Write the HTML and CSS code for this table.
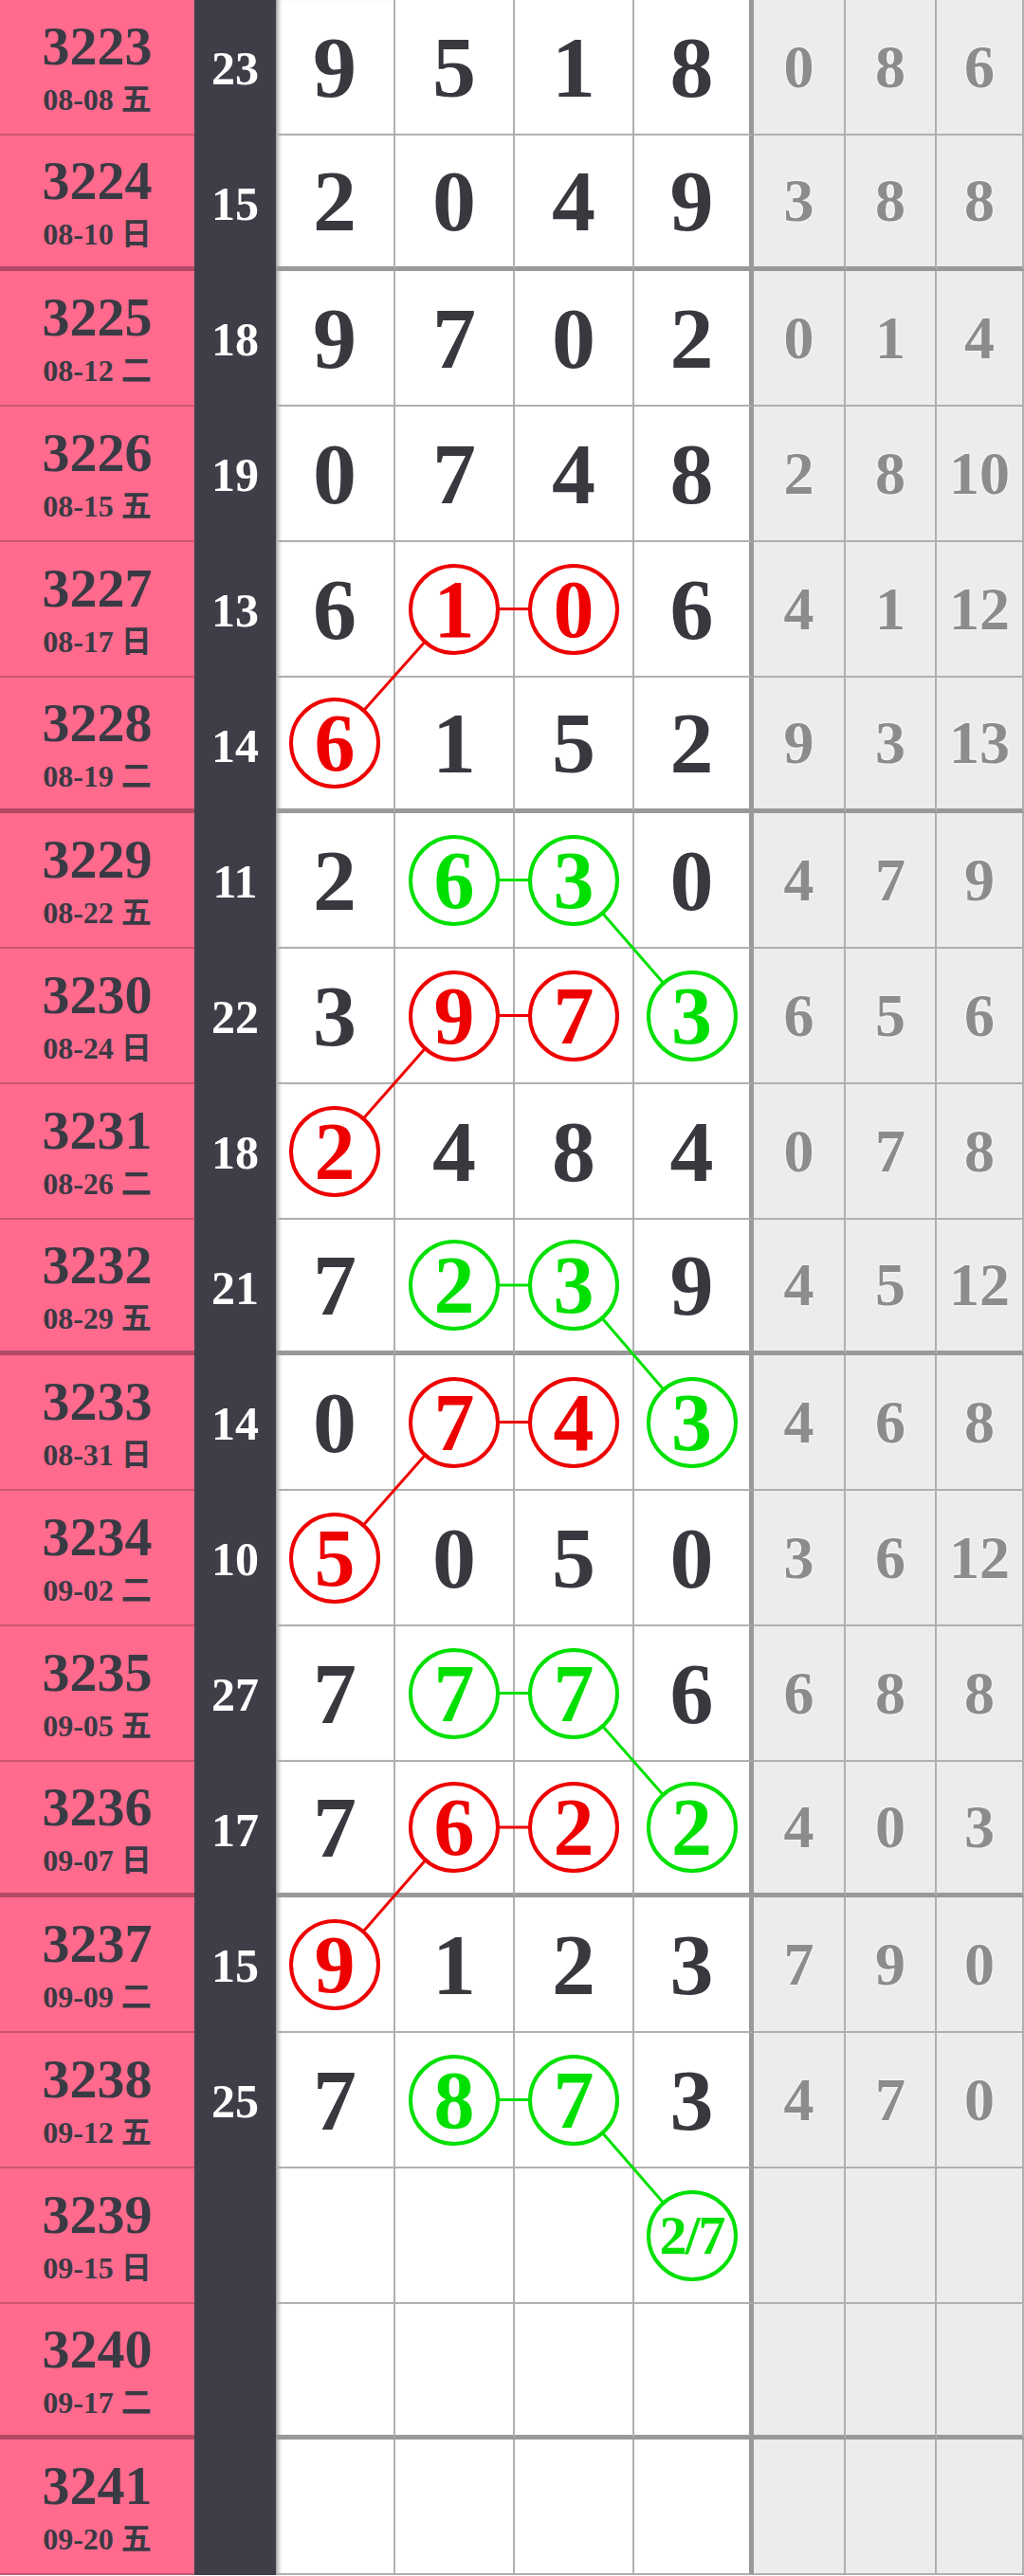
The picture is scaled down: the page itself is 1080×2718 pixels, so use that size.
FILE: index.html
```html
<!DOCTYPE html>
<html lang="zh-CN">
<head>
    <meta charset="UTF-8">
    <meta name="viewport" content="width=device-width, initial-scale=1.0">
    <title>走势图</title>
    <link rel="stylesheet" href="styles.css">
</head>
<body>
    <div class="chart" id="chart">
        <svg class="links" id="links" xmlns="http://www.w3.org/2000/svg"></svg>
    </div>

    <script>
        // issue, date, weekday, sum, digits, stats ("r"/"g" = circled, "-" = empty)
        const draws = [
            ['3223', '08-08', '五', '23', '9 5 1 8', '0 8 6'],
            ['3224', '08-10', '日', '15', '2 0 4 9', '3 8 8'],
            ['3225', '08-12', '二', '18', '9 7 0 2', '0 1 4'],
            ['3226', '08-15', '五', '19', '0 7 4 8', '2 8 10'],
            ['3227', '08-17', '日', '13', '6 r1 r0 6', '4 1 12'],
            ['3228', '08-19', '二', '14', 'r6 1 5 2', '9 3 13'],
            ['3229', '08-22', '五', '11', '2 g6 g3 0', '4 7 9'],
            ['3230', '08-24', '日', '22', '3 r9 r7 g3', '6 5 6'],
            ['3231', '08-26', '二', '18', 'r2 4 8 4', '0 7 8'],
            ['3232', '08-29', '五', '21', '7 g2 g3 9', '4 5 12'],
            ['3233', '08-31', '日', '14', '0 r7 r4 g3', '4 6 8'],
            ['3234', '09-02', '二', '10', 'r5 0 5 0', '3 6 12'],
            ['3235', '09-05', '五', '27', '7 g7 g7 6', '6 8 8'],
            ['3236', '09-07', '日', '17', '7 r6 r2 g2', '4 0 3'],
            ['3237', '09-09', '二', '15', 'r9 1 2 3', '7 9 0'],
            ['3238', '09-12', '五', '25', '7 g8 g7 3', '4 7 0'],
            ['3239', '09-15', '日', '', '- - - g2/7', '- - -'],
            ['3240', '09-17', '二', '', '- - - -', '- - -'],
            ['3241', '09-20', '五', '', '- - - -', '- - -']
        ];

        const links = [
            ['red', '3227-2', '3227-3'], ['red', '3227-2', '3228-1'],
            ['green', '3229-2', '3229-3'], ['green', '3229-3', '3230-4'],
            ['red', '3230-2', '3230-3'], ['red', '3230-2', '3231-1'],
            ['green', '3232-2', '3232-3'], ['green', '3232-3', '3233-4'],
            ['red', '3233-2', '3233-3'], ['red', '3233-2', '3234-1'],
            ['green', '3235-2', '3235-3'], ['green', '3235-3', '3236-4'],
            ['red', '3236-2', '3236-3'], ['red', '3236-2', '3237-1'],
            ['green', '3238-2', '3238-3'], ['green', '3238-3', '3239-4']
        ];

        const chart = document.getElementById('chart');

        draws.forEach(function(d) {
            const row = document.createElement('div');
            row.className = 'row' + ((+d[0] - 3220) % 4 === 0 ? ' group-end' : '');

            let html = '<div class="issue"><span class="issue-no">' + d[0] + '</span>' +
                '<span class="issue-date">' + d[1] + ' ' + d[2] + '</span></div>' +
                '<div class="sum">' + d[3] + '</div>';

            d[4].split(' ').forEach(function(v, i) {
                let cls = 'num';
                if (i === 0) cls += ' num-first';
                if (i === 3) cls += ' num-last';
                let inner = '';
                if (v[0] === 'r' || v[0] === 'g') {
                    const text = v.slice(1);
                    inner = '<span class="ball ' + (v[0] === 'r' ? 'red' : 'green') +
                        (text.length > 1 ? ' pair' : '') + '" id="b-' + d[0] + '-' + (i + 1) + '">' + text + '</span>';
                } else if (v !== '-') {
                    inner = v;
                }
                html += '<div class="' + cls + '">' + inner + '</div>';
            });

            d[5].split(' ').forEach(function(v) {
                html += '<div class="stat">' + (v === '-' ? '' : v) + '</div>';
            });

            row.innerHTML = html;
            chart.appendChild(row);
        });

        // Connect circled numbers
        const svg = document.getElementById('links');
        const box = chart.getBoundingClientRect();

        function center(id) {
            const r = document.getElementById('b-' + id).getBoundingClientRect();
            return [r.left + r.width / 2 - box.left, r.top + r.height / 2 - box.top];
        }

        links.forEach(function(l) {
            const a = center(l[1]);
            const b = center(l[2]);
            const line = document.createElementNS('http://www.w3.org/2000/svg', 'line');
            line.setAttribute('x1', a[0]);
            line.setAttribute('y1', a[1]);
            line.setAttribute('x2', b[0]);
            line.setAttribute('y2', b[1]);
            line.setAttribute('class', l[0]);
            svg.appendChild(line);
        });
    </script>
</body>
</html>
```

FILE: styles.css
```css
body {
    margin: 0;
    background: #fff;
    font-family: "Liberation Serif", "Noto Sans CJK SC", serif;
    font-weight: bold;
}
.chart {
    position: relative;
    z-index: 0;
    width: 1080px;
}
.links {
    position: absolute;
    top: 0;
    left: 0;
    width: 100%;
    height: 100%;
    z-index: 1;
    pointer-events: none;
}
.links line {
    stroke-width: 3;
}
.links .red {
    stroke: #ee0000;
}
.links .green {
    stroke: #00e000;
}
.row {
    display: grid;
    grid-template-columns: 205px 86px repeat(4, 126px) 97px 96px 92px;
    height: 143px;
}
.row > div {
    display: flex;
    align-items: center;
    justify-content: center;
    box-sizing: border-box;
    line-height: 1;
}
.issue {
    flex-direction: column;
    background-color: #ff6a8d;
    color: #3a3a44;
    border-bottom: 2px solid #c9566f;
}
.issue-no {
    font-size: 58px;
}
.issue-date {
    font-size: 32px;
    margin-top: 11px;
}
.sum {
    background-color: #3e3e48;
    color: #fff;
    font-size: 50px;
}
.num {
    background-color: #fff;
    color: #38383f;
    font-size: 92px;
    border-right: 2px solid #b0b0b0;
    border-bottom: 2px solid #b0b0b0;
}
.num-first {
    box-shadow: inset 6px 0 5px -4px rgba(0, 0, 0, 0.45);
}
.num-last {
    border-right: 5px solid #999;
}
.stat {
    background-color: #ececec;
    color: #8c8c8c;
    font-size: 64px;
    border-right: 2px solid #b0b0b0;
    border-bottom: 2px solid #b0b0b0;
    text-shadow: 0 0 3px #fff;
}
.group-end .issue {
    border-bottom: 5px solid #b24a66;
}
.group-end .num,
.group-end .stat {
    border-bottom: 5px solid #999;
}
.ball {
    position: relative;
    z-index: 2;
    width: 96px;
    height: 96px;
    box-sizing: border-box;
    border: 4px solid;
    border-radius: 50%;
    background-color: #fff;
    display: flex;
    align-items: center;
    justify-content: center;
    font-size: 86px;
    line-height: 1;
}
.ball.red {
    color: #ee0000;
}
.ball.green {
    color: #00e000;
}
.ball.pair {
    font-size: 58px;
    letter-spacing: -2px;
}
```
